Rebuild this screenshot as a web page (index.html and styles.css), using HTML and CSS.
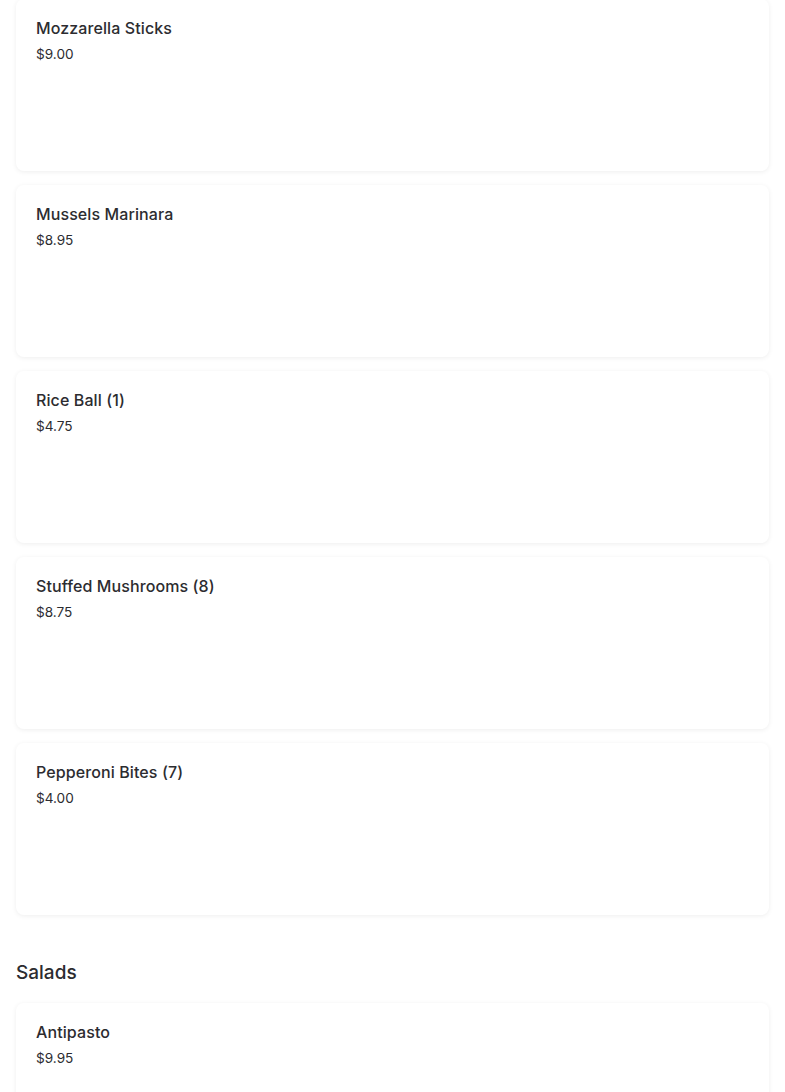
FILE: index.html
```html
<!DOCTYPE html>
<html>
<head>
<meta charset="utf-8">
<link rel="stylesheet" href="styles.css">
</head>
<body>
<main class="menu">
  <section class="category">
    <div class="card"><div class="name">Mozzarella Sticks</div><div class="price">$9.00</div></div>
    <div class="card"><div class="name">Mussels Marinara</div><div class="price">$8.95</div></div>
    <div class="card"><div class="name">Rice Ball (1)</div><div class="price">$4.75</div></div>
    <div class="card"><div class="name">Stuffed Mushrooms (8)</div><div class="price">$8.75</div></div>
    <div class="card"><div class="name">Pepperoni Bites (7)</div><div class="price">$4.00</div></div>
  </section>
  <section class="category">
    <h2 class="heading">Salads</h2>
    <div class="card"><div class="name">Antipasto</div><div class="price">$9.95</div></div>
  </section>
</main>
</body>
</html>
```
FILE: styles.css
```css
html, body {
  margin: 0;
  padding: 0;
  background: #ffffff;
}
body {
  font-family: Inter, "Noto Sans", sans-serif;
  color: #2c2c30;
  overflow: hidden;
}
.menu {
  padding: 0 16px;
  margin-top: -1px;
}
.category {
  display: flex;
  flex-direction: column;
  gap: 14px;
}
.card {
  box-sizing: border-box;
  height: 172px;
  padding: 17px 20px;
  background: #fff;
  border-radius: 8px;
  box-shadow: 0 1px 5px rgba(0, 0, 0, 0.07);
}
.name {
  font-size: 16px;
  font-weight: 500;
  line-height: 24px;
  letter-spacing: 0.1px;
  margin-bottom: 4px;
}
.price {
  font-size: 13.6px;
  line-height: 20px;
  color: #2c2c30;
}
.heading {
  margin: 44px 0 2px;
  font-size: 19px;
  font-weight: 500;
  line-height: 28px;
}
```
